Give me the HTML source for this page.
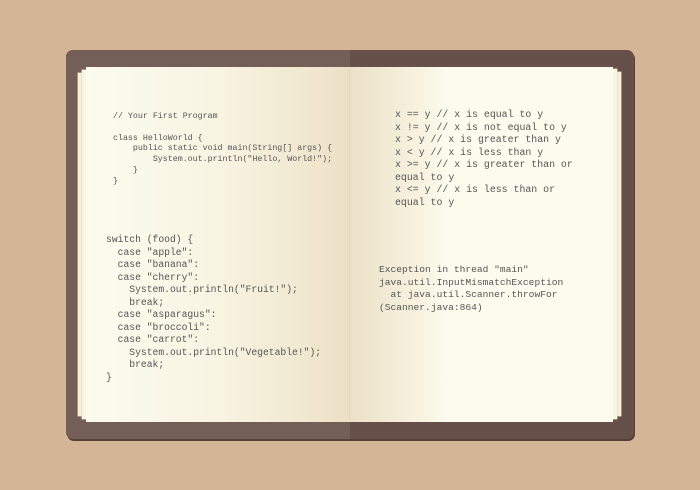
<!DOCTYPE html>
<html><head><meta charset="utf-8"><style>
*{margin:0;padding:0;box-sizing:border-box}
body{width:700px;height:490px;background:#d4b595;position:relative;overflow:hidden;font-family:"Liberation Mono","Courier New","Cousine",monospace;color:#555}
.cover{position:absolute;left:66px;top:50px;width:568px;height:389px;border-radius:7px;background:#665049;box-shadow:1px 2px 0 #553f38}
.coverL{position:absolute;left:66px;top:50px;width:284px;height:389px;border-radius:7px 0 0 7px;background:#735f58}
.p{position:absolute;background:#fcfbee}
.s1{left:78px;top:73px;width:272px;height:343px;background:#f5f1dc;box-shadow:0 0 0 0.5px #d8ceb0}
.s2{left:82px;top:70px;width:268px;height:349px;background:#f8f5e4;box-shadow:0 0 0 0.5px #d8ceb0}
.pl{left:86px;top:67px;width:264px;height:355px;background:linear-gradient(to right,#fcfbee 0%,#f8f4e2 50%,#efe5cc 90%,#ebe0c6 100%)}
.r1{left:350px;top:72px;width:271px;height:344px;background:#f5f1dc;box-shadow:0 0 0 0.5px #d8ceb0}
.r2{left:350px;top:69px;width:267px;height:350px;background:#f8f5e4;box-shadow:0 0 0 0.5px #d8ceb0}
.pr{left:350px;top:67px;width:263px;height:355px;background:linear-gradient(to right,#ece1c8 0%,#efe6cf 8%,#f7f1de 25%,#fcfbee 37%,#fcfbee 100%)}
pre{position:absolute;font-family:"Liberation Mono","Courier New","Cousine",monospace;white-space:pre}
.a{left:113px;top:112px;font-size:8.3px;line-height:10.8px}
.b{left:106px;top:234px;font-size:9.7px;line-height:12.5px}
.c{left:395px;top:109px;font-size:9.9px;line-height:12.5px}
.d{left:379px;top:264px;font-size:9.6px;line-height:12.5px}
</style></head><body>
<div class="cover"></div><div class="coverL"></div>
<div class="p s1"></div><div class="p s2"></div><div class="p pl"></div>
<div class="p r1"></div><div class="p r2"></div><div class="p pr"></div>
<pre class="a">// Your First Program

class HelloWorld {
    public static void main(String[] args) {
        System.out.println("Hello, World!");
    }
}</pre>
<pre class="b">switch (food) {
  case "apple":
  case "banana":
  case "cherry":
    System.out.println("Fruit!");
    break;
  case "asparagus":
  case "broccoli":
  case "carrot":
    System.out.println("Vegetable!");
    break;
}</pre>
<pre class="c">x == y // x is equal to y
x != y // x is not equal to y
x > y // x is greater than y
x &lt; y // x is less than y
x >= y // x is greater than or
equal to y
x &lt;= y // x is less than or
equal to y</pre>
<pre class="d">Exception in thread "main"
java.util.InputMismatchException
  at java.util.Scanner.throwFor
(Scanner.java:864)</pre>
</body></html>
